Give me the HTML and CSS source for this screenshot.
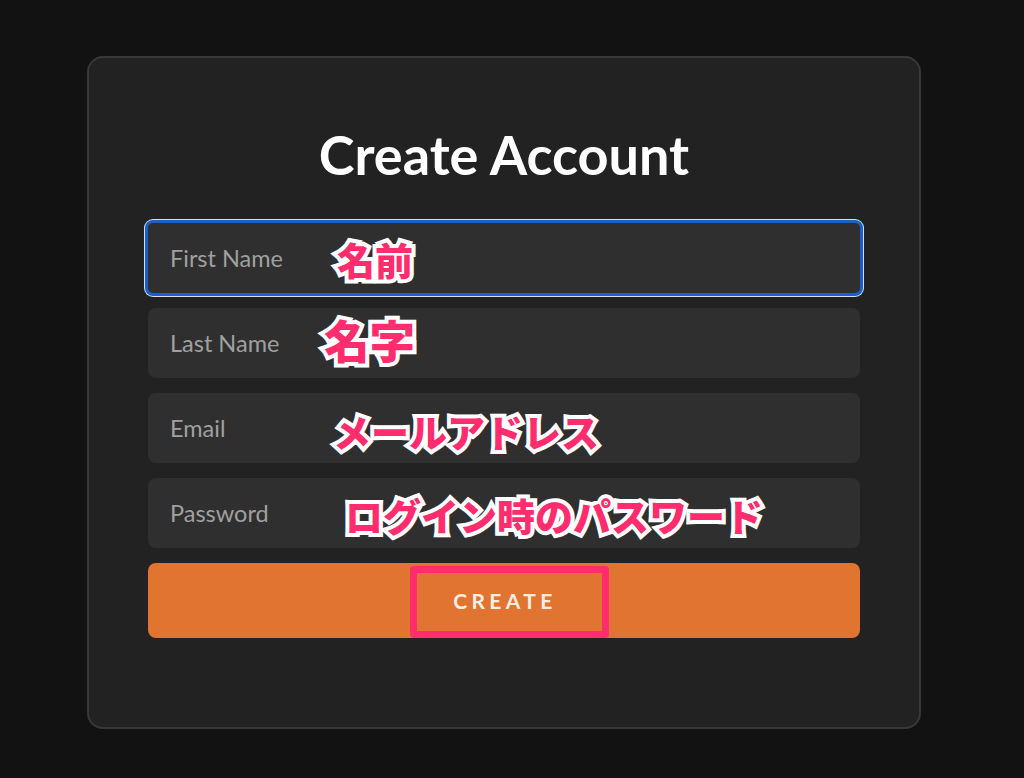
FILE: index.html
```html
<!DOCTYPE html>
<html lang="ja">
<head>
<meta charset="utf-8">
<title>Create Account</title>
<link rel="stylesheet" href="styles.css">
</head>
<body>
<div class="card">
  <h1 class="title">Create Account</h1>
  <form class="form">
    <div class="field">
      <div class="input focused">First Name</div>
      <span class="note note-first">名前</span>
    </div>
    <div class="field">
      <div class="input">Last Name</div>
      <span class="note note-last">名字</span>
    </div>
    <div class="field">
      <div class="input">Email</div>
      <span class="note note-email">メールアドレス</span>
    </div>
    <div class="field">
      <div class="input">Password</div>
      <span class="note note-pass">ログイン時のパスワード</span>
    </div>
    <div class="field">
      <button type="button" class="btn">CREATE</button>
      <span class="btn-mark"></span>
    </div>
  </form>
</div>
</body>
</html>
```
FILE: styles.css
```css
html, body {
  margin: 0;
  padding: 0;
  background: #121212;
  height: 100%;
}
body {
  font-family: Lato, "Noto Sans", sans-serif;
  padding: 56px 0 0 87px;
  box-sizing: border-box;
}
.card {
  width: 834px;
  height: 673px;
  box-sizing: border-box;
  border: 2px solid #383838;
  border-radius: 16px;
  background: #222222;
  padding: 0 59px;
}
.title {
  margin: 66px 0 0;
  text-align: center;
  color: #ffffff;
  font-weight: 700;
  font-size: 54px;
  line-height: 62px;
}
.form {
  margin-top: 37px;
  display: flex;
  flex-direction: column;
  gap: 15px;
}
.field {
  position: relative;
}
.input {
  height: 70px;
  box-sizing: border-box;
  background: #2f2f2f;
  border-radius: 8px;
  padding-left: 22px;
  display: flex;
  align-items: center;
  color: #a0a0a0;
  font-size: 23.5px;
}
.input.focused {
  box-shadow: 0 0 0 3px #1a5fcc, 0 0 0 4px #d8e0ee;
  border-radius: 5px;
}
.btn {
  display: block;
  width: 100%;
  height: 75px;
  border: 0;
  border-radius: 8px;
  background: #e17430;
  color: #f6eee4;
  font-family: Lato, sans-serif;
  font-weight: 700;
  font-size: 21px;
  letter-spacing: 4.4px;
  padding: 0 0 0 2px;
}
.btn-mark {
  position: absolute;
  left: 262px;
  top: 3px;
  width: 199px;
  height: 72px;
  box-sizing: border-box;
  border: 7px solid #ff2d6e;
  border-radius: 4px;
}
.note {
  position: absolute;
  font-family: "Noto Sans CJK JP", sans-serif;
  font-weight: 900;
  color: #ff2d6e;
  -webkit-text-stroke: 8px #ffffff;
  paint-order: stroke fill;
  line-height: 1;
  white-space: nowrap;
}
.note-first { left: 189px; top: 17px; font-size: 38px; }
.note-last { left: 176px; top: 9px; font-size: 45.5px; }
.note-email { left: 185px; top: 19px; font-size: 38px; }
.note-pass { left: 197px; top: 18px; font-size: 38px; }
```
